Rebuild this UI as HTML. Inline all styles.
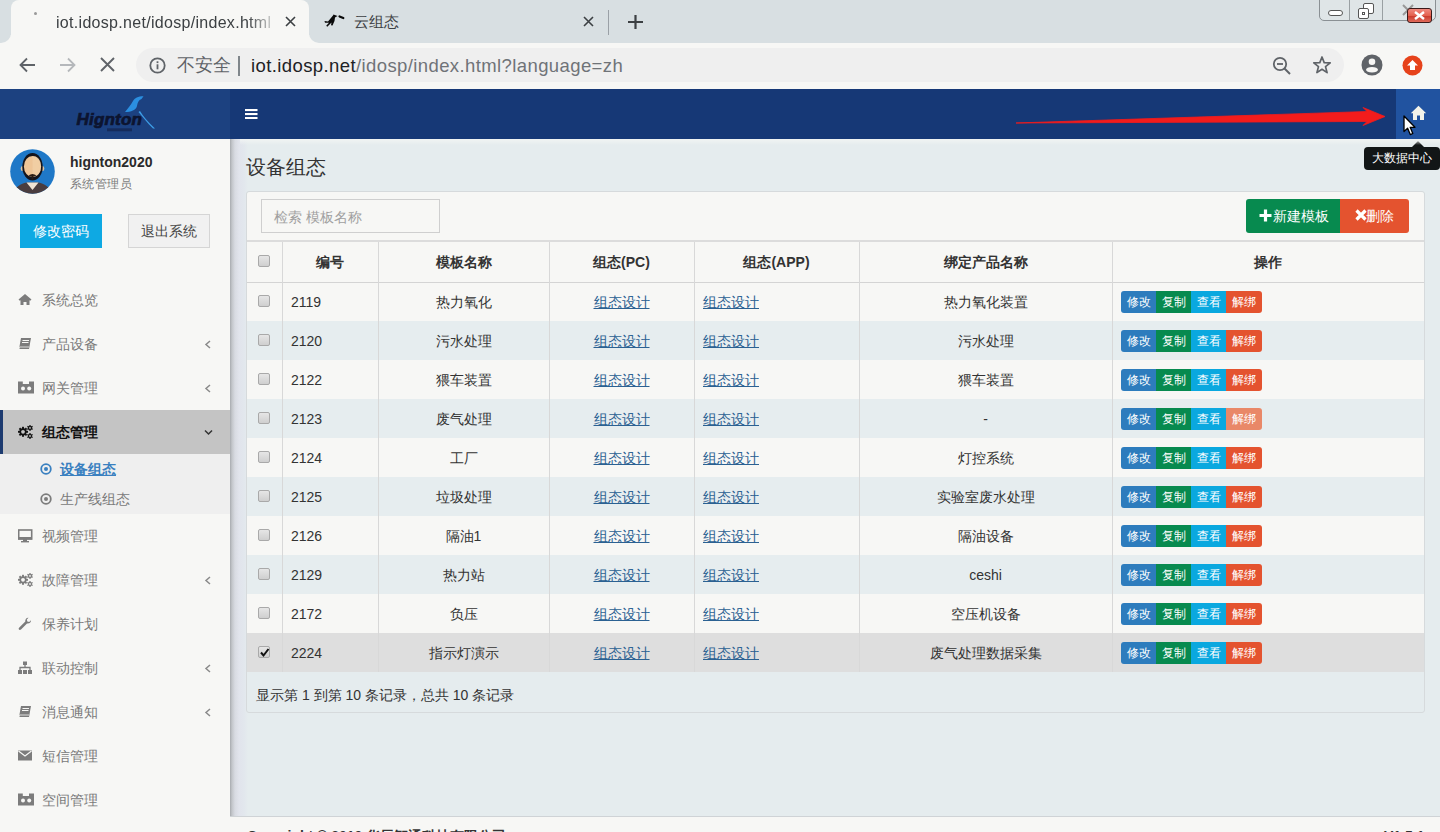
<!DOCTYPE html>
<html><head><meta charset="utf-8">
<style>
*{box-sizing:border-box;margin:0;padding:0}
html,body{width:1440px;height:832px;overflow:hidden;font-family:"Liberation Sans",sans-serif;background:#e5ecee;position:relative}
.a{position:absolute}
/* browser */
#tabs{left:0;top:0;width:1440px;height:43px;background:#d8dfe2}
#tab1{left:11px;top:0px;width:298px;height:44px;background:#f7f7f5;border-radius:8px 8px 0 0}
#toolbar{left:0;top:43px;width:1440px;height:46px;background:#f7f7f5}
#omni{left:136px;top:48px;width:1208px;height:34px;border-radius:17px;background:#efefef}
.t{white-space:nowrap;line-height:1}
/* navbar */
#nav{left:0;top:89px;width:1440px;height:50px;background:#163876}
#logo{left:0;top:89px;width:230px;height:50px;background:#1c4180}
#home{left:1396px;top:89px;width:44px;height:50px;background:#2153a0}
/* sidebar */
#side{left:0;top:139px;width:230px;height:693px;background:#f7f7f5}
#shadow{left:230px;top:139px;width:18px;height:677px;background:linear-gradient(to right,#a8abaf 0,#c3c6cb 2px,#d8dbe2 5px,#e1e4ec 9px,#e2e7ed 14px,#e5ecee 18px)}
.mi{left:0;width:230px;height:44px;color:#787878;font-size:14px}
.mi .tx{position:absolute;left:42px;top:15px}
.mi .ic{position:absolute;left:18px;top:15px;width:14px;height:14px}
.chev{position:absolute;left:204px;top:17px}
/* content */
#box{left:246px;top:191px;width:1178px;height:521px;background:#e5ecee;border:1px solid #d8dcde;border-radius:3px}
.btnx{height:22px;width:35px;color:#fff;font-size:12px;text-align:center;line-height:22px}
table{border-collapse:collapse}
</style></head><body>
<!-- ===== Browser chrome ===== -->
<div id="tabs" class="a"></div>
<div id="tab1" class="a"></div>
<div class="a" style="left:0;top:35px;width:11px;height:9px;background:#f7f7f5"></div>
<div class="a" style="left:-9px;top:25px;width:20px;height:18px;background:#d8dfe2;border-radius:0 0 10px 0"></div>
<div class="a" style="left:309px;top:35px;width:10px;height:9px;background:#f7f7f5"></div>
<div class="a" style="left:309px;top:25px;width:20px;height:18px;background:#d8dfe2;border-radius:0 0 0 10px"></div>
<div class="a" style="left:34px;top:12px;width:3px;height:3px;border-radius:2px;background:#999"></div>
<div class="a t" style="left:56px;top:15px;font-size:16px;letter-spacing:0.3px;color:#3c4043;width:218px;overflow:hidden;-webkit-mask-image:linear-gradient(to right,#000 88%,rgba(0,0,0,0.15))">iot.idosp.net/idosp/index.html</div>
<svg class="a" style="left:285px;top:16px" width="11" height="11" viewBox="0 0 11 11"><path d="M1 1L10 10M10 1L1 10" stroke="#3c4043" stroke-width="1.6"/></svg>
<svg class="a" style="left:318px;top:8px" width="32" height="26" viewBox="0 0 32 26"><path d="M6.5 13 L10 13.5 L15 7.5 L15.5 6.5 L19.5 8 L17 9.5 L16.5 13 L14.5 17.5 L13 17.2 L13.5 14.5 L9.3 18.7 L8.2 17.7 L11 14.8 L7 14.8 Z" fill="#0a0a0a"/><path d="M21.5 8.5 L25.3 10" stroke="#0a0a0a" stroke-width="2.2" stroke-linecap="round"/></svg>
<div class="a t" style="left:354px;top:14px;font-size:15px;color:#3c4043">云组态</div>
<svg class="a" style="left:583px;top:16px" width="11" height="11" viewBox="0 0 11 11"><path d="M1 1L10 10M10 1L1 10" stroke="#3c4043" stroke-width="1.6"/></svg>
<div class="a" style="left:608px;top:10px;width:1px;height:25px;background:#9aa0a6"></div>
<svg class="a" style="left:627px;top:14px" width="17" height="16" viewBox="0 0 17 16"><path d="M8.5 1V15M1 8H16" stroke="#3c4043" stroke-width="2.2"/></svg>
<!-- window controls -->
<div class="a" style="left:1319px;top:-3px;width:117px;height:24px;border:1.5px solid #8a9094;border-radius:0 0 5px 5px;background:#dfe5e7"></div>
<div class="a" style="left:1349px;top:0;width:1px;height:20px;background:#9aa0a3"></div>
<div class="a" style="left:1382px;top:0;width:1px;height:20px;background:#9aa0a3"></div>
<div class="a" style="left:1328px;top:10px;width:15px;height:6px;border:1.5px solid #555;border-radius:3px;background:#fff"></div>
<div class="a" style="left:1363px;top:3px;width:11px;height:11px;border:1.5px solid #555;border-radius:2px;background:#fff"></div>
<div class="a" style="left:1358px;top:8px;width:11px;height:11px;border:1.5px solid #555;border-radius:2px;background:#fff"></div>
<div class="a" style="left:1362px;top:12px;width:3px;height:3px;border:1.5px solid #555"></div>
<svg class="a" style="left:1401px;top:3px" width="14" height="14" viewBox="0 0 14 14"><path d="M2 2L12 12M12 2L2 12" stroke="#999" stroke-width="2"/></svg>
<div class="a" style="left:1407px;top:8px;width:25px;height:15px;border:1.5px solid #3a1a1a;border-radius:3px;background:linear-gradient(#f08a80,#e3604e 50%,#c9382a 52%,#e06a5a)"></div>
<svg class="a" style="left:1413px;top:11px" width="13" height="9" viewBox="0 0 13 9"><path d="M2 1L11 8M11 1L2 8" stroke="#fff" stroke-width="2.4"/></svg>

<div id="toolbar" class="a"></div>
<div id="omni" class="a"></div>
<svg class="a" style="left:19px;top:57px" width="17" height="16" viewBox="0 0 17 16"><path d="M16 8H2M8 1.5L1.5 8L8 14.5" stroke="#5f6368" stroke-width="1.8" fill="none"/></svg>
<svg class="a" style="left:59px;top:57px" width="17" height="16" viewBox="0 0 17 16"><path d="M1 8H15M9 1.5L15.5 8L9 14.5" stroke="#b5b8bb" stroke-width="1.8" fill="none"/></svg>
<svg class="a" style="left:100px;top:57px" width="15" height="15" viewBox="0 0 15 15"><path d="M1 1L14 14M14 1L1 14" stroke="#5f6368" stroke-width="1.9"/></svg>
<svg class="a" style="left:149px;top:57px" width="17" height="17" viewBox="0 0 17 17"><circle cx="8.5" cy="8.5" r="7.2" stroke="#5f6368" stroke-width="1.8" fill="none"/><rect x="7.6" y="7.3" width="1.8" height="5" fill="#5f6368"/><rect x="7.6" y="4.3" width="1.8" height="1.8" fill="#5f6368"/></svg>
<div class="a t" style="left:177px;top:56px;font-size:18px;color:#5f6368">不安全</div>
<div class="a" style="left:238px;top:56px;width:2px;height:20px;background:#80868b"></div>
<div class="a t" style="left:251px;top:57px;font-size:18.5px;letter-spacing:0.4px;color:#202124">iot.idosp.net<span style="color:#6f7378">/idosp/index.html?language=zh</span></div>
<svg class="a" style="left:1272px;top:56px" width="20" height="19" viewBox="0 0 20 19"><circle cx="8" cy="8" r="6.2" stroke="#5f6368" stroke-width="1.8" fill="none"/><path d="M5 8H11" stroke="#5f6368" stroke-width="1.8"/><path d="M12.5 12.5L18 18" stroke="#5f6368" stroke-width="2"/></svg>
<svg class="a" style="left:1312px;top:55px" width="20" height="20" viewBox="0 0 20 20"><path d="M10 2L12.2 7.6L18.2 7.9L13.5 11.6L15.1 17.6L10 14.3L4.9 17.6L6.5 11.6L1.8 7.9L7.8 7.6Z" stroke="#5f6368" stroke-width="1.7" fill="none" stroke-linejoin="round"/></svg>
<svg class="a" style="left:1361px;top:54px" width="22" height="22" viewBox="0 0 22 22"><circle cx="11" cy="11" r="10.5" fill="#5f6368"/><circle cx="11" cy="7.8" r="3.3" fill="#f7f7f5"/><ellipse cx="11" cy="15.8" rx="6" ry="2.8" fill="#f7f7f5"/></svg>
<svg class="a" style="left:1402px;top:55px" width="21" height="21" viewBox="0 0 21 21"><circle cx="10.5" cy="10.5" r="10" fill="#e6421b"/><path d="M10.5 5L16 10.5H13V15H8V10.5H5Z" fill="#fff"/></svg>

<!-- ===== Navbar ===== -->
<div id="nav" class="a"></div>
<div id="logo" class="a"></div>
<div id="home" class="a"></div>
<svg class="a" style="left:70px;top:92px" width="90" height="44" viewBox="0 0 90 44">
<path d="M55 20 C58 16 61 13 63 9 C64.5 6 68 4.2 73.5 4.2 L71.5 7 C68.5 8 67.5 11 67 14 C66 18 61 20 55 20 Z" fill="#2b8fe0"/>
<path d="M70 19 C73 24 78 30 85 36.5 L83 36.5 C77 31 73 25 68.5 20 Z" fill="#3d9de6"/>
<text x="6.5" y="32.5" font-family="Liberation Sans" font-weight="bold" font-style="italic" font-size="17" fill="#0c1430" stroke="#0c1430" stroke-width="0.7" letter-spacing="0.2">Hignton</text>
<rect x="37" y="36.3" width="25" height="3" fill="#101a3c" opacity="0.55"/>
</svg>
<svg class="a" style="left:245px;top:109px" width="13" height="10" viewBox="0 0 13 10"><rect x="0" y="0" width="12.5" height="2.1" fill="#fff"/><rect x="0" y="4" width="12.5" height="2.1" fill="#fff"/><rect x="0" y="8" width="12.5" height="2.1" fill="#fff"/></svg>
<svg class="a" style="left:1410px;top:105px" width="17" height="16" viewBox="0 0 17 16"><path d="M8.5 0.8L0.8 8.2H3V15H7V10.5H10V15H14V8.2H16.2Z" fill="#f3f3ea"/></svg>
<!-- red arrow -->
<svg class="a" style="left:1000px;top:95px" width="400" height="45" viewBox="0 0 400 45"><path d="M16 28 L367 16.5 L363 12.5 L385 21.5 L363 30.5 L367 26.5 Z" fill="#f31c1c" stroke="#f31c1c" stroke-width="0.8" stroke-linejoin="round"/></svg>
<!-- cursor -->
<svg class="a" style="left:1403px;top:115px" width="15" height="22" viewBox="0 0 15 22"><path d="M1 1L1 16.5L4.6 13.2L7.3 19.6L9.8 18.5L7.2 12.3L12 12.3Z" fill="#fff" stroke="#000" stroke-width="1.3" stroke-linejoin="round"/></svg>
<!-- tooltip -->
<div class="a" style="left:1364px;top:147px;width:76px;height:23px;background:#121617;border-radius:4px"></div>
<div class="a" style="left:1412px;top:141px;width:0;height:0;border-left:6px solid transparent;border-right:6px solid transparent;border-bottom:6px solid #121617"></div>
<div class="a t" style="left:1372px;top:152px;font-size:12px;color:#fff">大数据中心</div>

<!-- ===== Sidebar ===== -->
<div id="side" class="a"></div>
<svg class="a" style="left:10px;top:149px" width="45" height="45" viewBox="0 0 45 45">
<defs><clipPath id="cc"><circle cx="22.5" cy="22.5" r="22.3"/></clipPath></defs>
<g clip-path="url(#cc)">
<rect width="45" height="45" fill="#1f78c7"/>
<path d="M3 45C5 38 11 34.5 16.5 33.5L28.5 33.5C34 34.5 40 38 42 45Z" fill="#4a3d3f"/>
<path d="M16.5 33.5L28.5 33.5L22.5 41Z" fill="#efe3d3"/>
<ellipse cx="12.3" cy="19.5" rx="1.6" ry="2.6" fill="#d9c3a8"/>
<ellipse cx="32.7" cy="19.5" rx="1.6" ry="2.6" fill="#d9c3a8"/>
<ellipse cx="22.5" cy="17.8" rx="10.2" ry="13.8" fill="#14141c"/>
<ellipse cx="22.5" cy="17.5" rx="8.6" ry="10.5" fill="#eec597"/>
<path d="M22.5 7C27 7 31 10 31 17.5C31 24 27 28 22.5 28Z" fill="#f3d3ab" opacity="0.6"/>
<path d="M18.5 26.5Q22.5 23.5 26.5 26.5L24 27.5L21 27.5Z" fill="#2a1c14"/>
<rect x="21.6" y="27" width="1.8" height="3.5" fill="#2a1c14"/>
</g></svg>
<div class="a t" style="left:70px;top:155px;font-size:14px;font-weight:bold;color:#2a2a2a">hignton2020</div>
<div class="a t" style="left:70px;top:178px;font-size:12px;letter-spacing:0.4px;color:#7a7a7a">系统管理员</div>
<div class="a" style="left:20px;top:214px;width:82px;height:34px;background:#0ea9e3;color:#fff;font-size:14px;text-align:center;line-height:34px">修改密码</div>
<div class="a" style="left:128px;top:214px;width:82px;height:34px;background:#f1f1f1;border:1px solid #d5d5d5;color:#444;font-size:14px;text-align:center;line-height:32px">退出系统</div>
<svg class="a" style="left:18px;top:293px" width="15" height="14" viewBox="0 0 15 14"><path d="M7 1L0.5 6.5L1.8 7.8L2.5 7.2V12H5.5V9H8.5V12H11.5V7.2L12.2 7.8L13.5 6.5Z" fill="#7c7c7c"/></svg><div class="a t" style="left:42px;top:293px;font-size:14px;color:#7a7a7a">系统总览</div><svg class="a" style="left:18px;top:337px" width="15" height="14" viewBox="0 0 15 14"><path d="M3 1H13L11 12H1Z" fill="#7c7c7c"/><path d="M4.5 3.5H11M4 5.5H10.5" stroke="#f7f7f5" stroke-width="1"/><path d="M1 12L1.5 10H11" stroke="#f7f7f5" stroke-width="0.8" fill="none"/></svg><div class="a t" style="left:42px;top:337px;font-size:14px;color:#7a7a7a">产品设备</div><svg class="a" style="left:204px;top:340px" width="8" height="9" viewBox="0 0 8 9"><path d="M6 1L2 4.5L6 8" stroke="#8a8a8a" stroke-width="1.5" fill="none"/></svg><svg class="a" style="left:18px;top:381px" width="16" height="14" viewBox="0 0 16 14"><rect x="0" y="0.5" width="16" height="12" fill="#7c7c7c"/><rect x="4.8" y="0" width="6.2" height="3" fill="#f7f7f5"/><circle cx="5" cy="7.5" r="2" fill="#f7f7f5"/><circle cx="11.2" cy="7.5" r="2" fill="#f7f7f5"/></svg><div class="a t" style="left:42px;top:381px;font-size:14px;color:#7a7a7a">网关管理</div><svg class="a" style="left:204px;top:384px" width="8" height="9" viewBox="0 0 8 9"><path d="M6 1L2 4.5L6 8" stroke="#8a8a8a" stroke-width="1.5" fill="none"/></svg><div class="a" style="left:0;top:410px;width:230px;height:44px;background:#c4c4c4"></div><div class="a" style="left:0;top:410px;width:3px;height:44px;background:#1d3b70"></div><svg class="a" style="left:18px;top:425px" width="15" height="15" viewBox="0 0 15 15"><circle cx="5" cy="6.8" r="3.6" fill="#111"/><rect x="4.05" y="1.80" width="1.9" height="2.40" fill="#111" transform="rotate(0.0 5 6.8)"/><rect x="4.05" y="1.80" width="1.9" height="2.40" fill="#111" transform="rotate(45.0 5 6.8)"/><rect x="4.05" y="1.80" width="1.9" height="2.40" fill="#111" transform="rotate(90.0 5 6.8)"/><rect x="4.05" y="1.80" width="1.9" height="2.40" fill="#111" transform="rotate(135.0 5 6.8)"/><rect x="4.05" y="1.80" width="1.9" height="2.40" fill="#111" transform="rotate(180.0 5 6.8)"/><rect x="4.05" y="1.80" width="1.9" height="2.40" fill="#111" transform="rotate(225.0 5 6.8)"/><rect x="4.05" y="1.80" width="1.9" height="2.40" fill="#111" transform="rotate(270.0 5 6.8)"/><rect x="4.05" y="1.80" width="1.9" height="2.40" fill="#111" transform="rotate(315.0 5 6.8)"/><circle cx="5" cy="6.8" r="1.9" fill="#c4c4c4"/><circle cx="12" cy="2.9" r="2.0" fill="#111"/><rect x="11.35" y="-0.10" width="1.3" height="2.00" fill="#111" transform="rotate(0.0 12 2.9)"/><rect x="11.35" y="-0.10" width="1.3" height="2.00" fill="#111" transform="rotate(60.0 12 2.9)"/><rect x="11.35" y="-0.10" width="1.3" height="2.00" fill="#111" transform="rotate(120.0 12 2.9)"/><rect x="11.35" y="-0.10" width="1.3" height="2.00" fill="#111" transform="rotate(180.0 12 2.9)"/><rect x="11.35" y="-0.10" width="1.3" height="2.00" fill="#111" transform="rotate(240.0 12 2.9)"/><rect x="11.35" y="-0.10" width="1.3" height="2.00" fill="#111" transform="rotate(300.0 12 2.9)"/><circle cx="12" cy="2.9" r="0.9" fill="#c4c4c4"/><circle cx="12" cy="11" r="2.0" fill="#111"/><rect x="11.35" y="8.00" width="1.3" height="2.00" fill="#111" transform="rotate(0.0 12 11)"/><rect x="11.35" y="8.00" width="1.3" height="2.00" fill="#111" transform="rotate(60.0 12 11)"/><rect x="11.35" y="8.00" width="1.3" height="2.00" fill="#111" transform="rotate(120.0 12 11)"/><rect x="11.35" y="8.00" width="1.3" height="2.00" fill="#111" transform="rotate(180.0 12 11)"/><rect x="11.35" y="8.00" width="1.3" height="2.00" fill="#111" transform="rotate(240.0 12 11)"/><rect x="11.35" y="8.00" width="1.3" height="2.00" fill="#111" transform="rotate(300.0 12 11)"/><circle cx="12" cy="11" r="0.9" fill="#c4c4c4"/></svg><div class="a t" style="left:42px;top:425px;font-size:14px;font-weight:bold;color:#111">组态管理</div><svg class="a" style="left:204px;top:429px" width="9" height="7" viewBox="0 0 9 7"><path d="M1 1.5L4.5 5L8 1.5" stroke="#333" stroke-width="1.5" fill="none"/></svg><div class="a" style="left:0;top:454px;width:230px;height:60px;background:#efefef"></div><svg class="a" style="left:40px;top:463px" width="12" height="12" viewBox="0 0 12 12"><circle cx="6" cy="6" r="4.8" stroke="#3a80c0" stroke-width="1.8" fill="none"/><circle cx="6" cy="6" r="2" fill="#3a80c0"/></svg><div class="a t" style="left:60px;top:462px;font-size:14px;color:#3a80c0;text-decoration:underline;font-weight:bold">设备组态</div><svg class="a" style="left:40px;top:493px" width="12" height="12" viewBox="0 0 12 12"><circle cx="6" cy="6" r="4.8" stroke="#7c7c7c" stroke-width="1.8" fill="none"/><circle cx="6" cy="6" r="2" fill="#7c7c7c"/></svg><div class="a t" style="left:60px;top:492px;font-size:14px;color:#7a7a7a">生产线组态</div><svg class="a" style="left:18px;top:529px" width="15" height="14" viewBox="0 0 15 14"><rect x="0.7" y="1" width="13" height="9" fill="none" stroke="#7c7c7c" stroke-width="1.6"/><rect x="0" y="8" width="14" height="2.5" fill="#7c7c7c"/><rect x="5" y="10" width="4" height="2" fill="#7c7c7c"/><rect x="3" y="12" width="8" height="1.4" fill="#7c7c7c"/></svg><div class="a t" style="left:42px;top:529px;font-size:14px;color:#7a7a7a">视频管理</div><svg class="a" style="left:18px;top:573px" width="15" height="15" viewBox="0 0 15 15"><circle cx="5" cy="6.8" r="3.6" fill="#7c7c7c"/><rect x="4.05" y="1.80" width="1.9" height="2.40" fill="#7c7c7c" transform="rotate(0.0 5 6.8)"/><rect x="4.05" y="1.80" width="1.9" height="2.40" fill="#7c7c7c" transform="rotate(45.0 5 6.8)"/><rect x="4.05" y="1.80" width="1.9" height="2.40" fill="#7c7c7c" transform="rotate(90.0 5 6.8)"/><rect x="4.05" y="1.80" width="1.9" height="2.40" fill="#7c7c7c" transform="rotate(135.0 5 6.8)"/><rect x="4.05" y="1.80" width="1.9" height="2.40" fill="#7c7c7c" transform="rotate(180.0 5 6.8)"/><rect x="4.05" y="1.80" width="1.9" height="2.40" fill="#7c7c7c" transform="rotate(225.0 5 6.8)"/><rect x="4.05" y="1.80" width="1.9" height="2.40" fill="#7c7c7c" transform="rotate(270.0 5 6.8)"/><rect x="4.05" y="1.80" width="1.9" height="2.40" fill="#7c7c7c" transform="rotate(315.0 5 6.8)"/><circle cx="5" cy="6.8" r="1.9" fill="#f7f7f5"/><circle cx="12" cy="2.9" r="2.0" fill="#7c7c7c"/><rect x="11.35" y="-0.10" width="1.3" height="2.00" fill="#7c7c7c" transform="rotate(0.0 12 2.9)"/><rect x="11.35" y="-0.10" width="1.3" height="2.00" fill="#7c7c7c" transform="rotate(60.0 12 2.9)"/><rect x="11.35" y="-0.10" width="1.3" height="2.00" fill="#7c7c7c" transform="rotate(120.0 12 2.9)"/><rect x="11.35" y="-0.10" width="1.3" height="2.00" fill="#7c7c7c" transform="rotate(180.0 12 2.9)"/><rect x="11.35" y="-0.10" width="1.3" height="2.00" fill="#7c7c7c" transform="rotate(240.0 12 2.9)"/><rect x="11.35" y="-0.10" width="1.3" height="2.00" fill="#7c7c7c" transform="rotate(300.0 12 2.9)"/><circle cx="12" cy="2.9" r="0.9" fill="#f7f7f5"/><circle cx="12" cy="11" r="2.0" fill="#7c7c7c"/><rect x="11.35" y="8.00" width="1.3" height="2.00" fill="#7c7c7c" transform="rotate(0.0 12 11)"/><rect x="11.35" y="8.00" width="1.3" height="2.00" fill="#7c7c7c" transform="rotate(60.0 12 11)"/><rect x="11.35" y="8.00" width="1.3" height="2.00" fill="#7c7c7c" transform="rotate(120.0 12 11)"/><rect x="11.35" y="8.00" width="1.3" height="2.00" fill="#7c7c7c" transform="rotate(180.0 12 11)"/><rect x="11.35" y="8.00" width="1.3" height="2.00" fill="#7c7c7c" transform="rotate(240.0 12 11)"/><rect x="11.35" y="8.00" width="1.3" height="2.00" fill="#7c7c7c" transform="rotate(300.0 12 11)"/><circle cx="12" cy="11" r="0.9" fill="#f7f7f5"/></svg><div class="a t" style="left:42px;top:573px;font-size:14px;color:#7a7a7a">故障管理</div><svg class="a" style="left:204px;top:576px" width="8" height="9" viewBox="0 0 8 9"><path d="M6 1L2 4.5L6 8" stroke="#8a8a8a" stroke-width="1.5" fill="none"/></svg><svg class="a" style="left:18px;top:617px" width="15" height="14" viewBox="0 0 15 14"><path d="M13 3.5C13 5.5 11 7 9 6.5L3 12.5C2.3 13.2 1 13 0.8 12.2C0.5 11.5 0.8 11 1.3 10.5L7.3 4.6C6.9 2.5 8.5 0.5 10.5 0.8L8.8 2.6L9.3 4.5L11.2 5L13 3.3Z" fill="#7c7c7c"/></svg><div class="a t" style="left:42px;top:617px;font-size:14px;color:#7a7a7a">保养计划</div><svg class="a" style="left:18px;top:661px" width="15" height="14" viewBox="0 0 15 14"><rect x="5" y="0.5" width="4" height="3.5" fill="#7c7c7c"/><path d="M7 4V6.5M2 9V6.5H12V9" stroke="#7c7c7c" stroke-width="1.3" fill="none"/><rect x="0" y="9" width="4" height="4" fill="#7c7c7c"/><rect x="5" y="9" width="4" height="4" fill="#7c7c7c"/><rect x="10" y="9" width="4" height="4" fill="#7c7c7c"/></svg><div class="a t" style="left:42px;top:661px;font-size:14px;color:#7a7a7a">联动控制</div><svg class="a" style="left:204px;top:664px" width="8" height="9" viewBox="0 0 8 9"><path d="M6 1L2 4.5L6 8" stroke="#8a8a8a" stroke-width="1.5" fill="none"/></svg><svg class="a" style="left:18px;top:705px" width="15" height="14" viewBox="0 0 15 14"><path d="M3 1H13L11 12H1Z" fill="#7c7c7c"/><path d="M4.5 3.5H11M4 5.5H10.5" stroke="#f7f7f5" stroke-width="1"/><path d="M1 12L1.5 10H11" stroke="#f7f7f5" stroke-width="0.8" fill="none"/></svg><div class="a t" style="left:42px;top:705px;font-size:14px;color:#7a7a7a">消息通知</div><svg class="a" style="left:204px;top:708px" width="8" height="9" viewBox="0 0 8 9"><path d="M6 1L2 4.5L6 8" stroke="#8a8a8a" stroke-width="1.5" fill="none"/></svg><svg class="a" style="left:18px;top:749px" width="15" height="14" viewBox="0 0 15 14"><rect x="0" y="1.5" width="14" height="10" fill="#7c7c7c"/><path d="M0.5 2L7 7L13.5 2" stroke="#f7f7f5" stroke-width="1.2" fill="none"/></svg><div class="a t" style="left:42px;top:749px;font-size:14px;color:#7a7a7a">短信管理</div><svg class="a" style="left:18px;top:793px" width="16" height="14" viewBox="0 0 16 14"><rect x="0" y="0.5" width="16" height="12" fill="#7c7c7c"/><rect x="4.8" y="0" width="6.2" height="3" fill="#f7f7f5"/><circle cx="5" cy="7.5" r="2" fill="#f7f7f5"/><circle cx="11.2" cy="7.5" r="2" fill="#f7f7f5"/></svg><div class="a t" style="left:42px;top:793px;font-size:14px;color:#7a7a7a">空间管理</div>
<div id="shadow" class="a"></div>

<!-- ===== Content ===== -->
<div class="a" style="left:240px;top:139px;width:1200px;height:6px;background:linear-gradient(#f1f4f3,rgba(229,236,238,0))"></div>
<div class="a t" style="left:246px;top:157px;font-size:20px;color:#333">设备组态</div>
<div class="a" style="left:246px;top:191px;width:1179px;height:522px;background:#e5ecee;border:1px solid #d6dadc;border-radius:3px"></div>
<div class="a" style="left:247px;top:192px;width:1177px;height:49px;background:#f7f7f5;border-radius:3px 3px 0 0"></div>
<div class="a" style="left:261px;top:199px;width:179px;height:34px;border:1px solid #cfcfcf;background:#f7f7f5"></div>
<div class="a t" style="left:274px;top:210px;font-size:14px;color:#a0a0a0">检索 模板名称</div>
<div class="a" style="left:1246px;top:199px;width:95px;height:34px;background:#078a4f;border-radius:3px 0 0 3px"></div>
<div class="a" style="left:1340px;top:199px;width:69px;height:34px;background:#e4532f;border-radius:0 3px 3px 0"></div>
<svg class="a" style="left:1259px;top:209px" width="13" height="13" viewBox="0 0 13 13"><path d="M6.5 0.5V12.5M0.5 6.5H12.5" stroke="#fff" stroke-width="3.2"/></svg>
<div class="a t" style="left:1273px;top:209px;font-size:14px;color:#fff">新建模板</div>
<svg class="a" style="left:1355px;top:209px" width="12" height="12" viewBox="0 0 12 12"><path d="M1.5 1.5L10.5 10.5M10.5 1.5L1.5 10.5" stroke="#fff" stroke-width="3.2"/></svg>
<div class="a t" style="left:1366px;top:209px;font-size:14px;color:#fff">删除</div>
<div class="a" style="left:247px;top:240px;width:1177px;height:2px;background:#dcdcdc"></div><div class="a" style="left:247px;top:242px;width:1177px;height:40px;background:#f7f7f5"></div><div class="a" style="left:247px;top:282px;width:1177px;height:39px;background:#f7f7f5"></div><div class="a" style="left:247px;top:321px;width:1177px;height:39px;background:#e6edef"></div><div class="a" style="left:247px;top:360px;width:1177px;height:39px;background:#f7f7f5"></div><div class="a" style="left:247px;top:399px;width:1177px;height:39px;background:#e6edef"></div><div class="a" style="left:247px;top:438px;width:1177px;height:39px;background:#f7f7f5"></div><div class="a" style="left:247px;top:477px;width:1177px;height:39px;background:#e6edef"></div><div class="a" style="left:247px;top:516px;width:1177px;height:39px;background:#f7f7f5"></div><div class="a" style="left:247px;top:555px;width:1177px;height:39px;background:#e6edef"></div><div class="a" style="left:247px;top:594px;width:1177px;height:39px;background:#f7f7f5"></div><div class="a" style="left:247px;top:633px;width:1177px;height:39px;background:#dedede"></div><div class="a" style="left:247px;top:282px;width:1177px;height:1px;background:#d4d4d4"></div><div class="a" style="left:282px;top:242px;width:1px;height:430px;background:#d8d8d8"></div><div class="a" style="left:378px;top:242px;width:1px;height:430px;background:#d8d8d8"></div><div class="a" style="left:549px;top:242px;width:1px;height:430px;background:#d8d8d8"></div><div class="a" style="left:694px;top:242px;width:1px;height:430px;background:#d8d8d8"></div><div class="a" style="left:859px;top:242px;width:1px;height:430px;background:#d8d8d8"></div><div class="a" style="left:1112px;top:242px;width:1px;height:430px;background:#d8d8d8"></div><div class="a" style="left:258px;top:255px;width:12px;height:12px;border:1px solid #a9a9a9;border-radius:2px;background:linear-gradient(#e6e6e6,#cfcfcf)"></div><div class="a t" style="left:282px;width:96px;top:255px;text-align:center;font-size:14px;font-weight:bold;color:#333">编号</div><div class="a t" style="left:378px;width:171px;top:255px;text-align:center;font-size:14px;font-weight:bold;color:#333">模板名称</div><div class="a t" style="left:549px;width:145px;top:255px;text-align:center;font-size:14px;font-weight:bold;color:#333">组态(PC)</div><div class="a t" style="left:694px;width:165px;top:255px;text-align:center;font-size:14px;font-weight:bold;color:#333">组态(APP)</div><div class="a t" style="left:859px;width:253px;top:255px;text-align:center;font-size:14px;font-weight:bold;color:#333">绑定产品名称</div><div class="a t" style="left:1112px;width:312px;top:255px;text-align:center;font-size:14px;font-weight:bold;color:#333">操作</div><div class="a" style="left:258px;top:295px;width:12px;height:12px;border:1px solid #a9a9a9;border-radius:2px;background:linear-gradient(#e6e6e6,#cfcfcf)"></div><div class="a t" style="left:291px;top:295px;font-size:14px;color:#333">2119</div><div class="a t" style="left:378px;width:171px;top:295px;text-align:center;font-size:14px;color:#333">热力氧化</div><div class="a t" style="left:549px;width:145px;top:295px;text-align:center;font-size:14px;color:#2b6192;text-decoration:underline">组态设计</div><div class="a t" style="left:703px;top:295px;font-size:14px;color:#2b6192;text-decoration:underline">组态设计</div><div class="a t" style="left:859px;width:253px;top:295px;text-align:center;font-size:14px;color:#333">热力氧化装置</div><div class="a" style="left:1121px;top:291px;width:141px;height:22px;border-radius:3px;overflow:hidden;font-size:12px;color:#fff;line-height:22px;text-align:center">
<div class="a" style="left:0;top:0;width:35px;height:22px;background:#2d7cbd">修改</div><div class="a" style="left:35px;top:0;width:35px;height:22px;background:#078a4f">复制</div><div class="a" style="left:70px;top:0;width:35px;height:22px;background:#0aa8df">查看</div><div class="a" style="left:105px;top:0;width:36px;height:22px;background:#e4532f">解绑</div></div><div class="a" style="left:258px;top:334px;width:12px;height:12px;border:1px solid #a9a9a9;border-radius:2px;background:linear-gradient(#e6e6e6,#cfcfcf)"></div><div class="a t" style="left:291px;top:334px;font-size:14px;color:#333">2120</div><div class="a t" style="left:378px;width:171px;top:334px;text-align:center;font-size:14px;color:#333">污水处理</div><div class="a t" style="left:549px;width:145px;top:334px;text-align:center;font-size:14px;color:#2b6192;text-decoration:underline">组态设计</div><div class="a t" style="left:703px;top:334px;font-size:14px;color:#2b6192;text-decoration:underline">组态设计</div><div class="a t" style="left:859px;width:253px;top:334px;text-align:center;font-size:14px;color:#333">污水处理</div><div class="a" style="left:1121px;top:330px;width:141px;height:22px;border-radius:3px;overflow:hidden;font-size:12px;color:#fff;line-height:22px;text-align:center">
<div class="a" style="left:0;top:0;width:35px;height:22px;background:#2d7cbd">修改</div><div class="a" style="left:35px;top:0;width:35px;height:22px;background:#078a4f">复制</div><div class="a" style="left:70px;top:0;width:35px;height:22px;background:#0aa8df">查看</div><div class="a" style="left:105px;top:0;width:36px;height:22px;background:#e4532f">解绑</div></div><div class="a" style="left:258px;top:373px;width:12px;height:12px;border:1px solid #a9a9a9;border-radius:2px;background:linear-gradient(#e6e6e6,#cfcfcf)"></div><div class="a t" style="left:291px;top:373px;font-size:14px;color:#333">2122</div><div class="a t" style="left:378px;width:171px;top:373px;text-align:center;font-size:14px;color:#333">猥车装置</div><div class="a t" style="left:549px;width:145px;top:373px;text-align:center;font-size:14px;color:#2b6192;text-decoration:underline">组态设计</div><div class="a t" style="left:703px;top:373px;font-size:14px;color:#2b6192;text-decoration:underline">组态设计</div><div class="a t" style="left:859px;width:253px;top:373px;text-align:center;font-size:14px;color:#333">猥车装置</div><div class="a" style="left:1121px;top:369px;width:141px;height:22px;border-radius:3px;overflow:hidden;font-size:12px;color:#fff;line-height:22px;text-align:center">
<div class="a" style="left:0;top:0;width:35px;height:22px;background:#2d7cbd">修改</div><div class="a" style="left:35px;top:0;width:35px;height:22px;background:#078a4f">复制</div><div class="a" style="left:70px;top:0;width:35px;height:22px;background:#0aa8df">查看</div><div class="a" style="left:105px;top:0;width:36px;height:22px;background:#e4532f">解绑</div></div><div class="a" style="left:258px;top:412px;width:12px;height:12px;border:1px solid #a9a9a9;border-radius:2px;background:linear-gradient(#e6e6e6,#cfcfcf)"></div><div class="a t" style="left:291px;top:412px;font-size:14px;color:#333">2123</div><div class="a t" style="left:378px;width:171px;top:412px;text-align:center;font-size:14px;color:#333">废气处理</div><div class="a t" style="left:549px;width:145px;top:412px;text-align:center;font-size:14px;color:#2b6192;text-decoration:underline">组态设计</div><div class="a t" style="left:703px;top:412px;font-size:14px;color:#2b6192;text-decoration:underline">组态设计</div><div class="a t" style="left:859px;width:253px;top:412px;text-align:center;font-size:14px;color:#333">-</div><div class="a" style="left:1121px;top:408px;width:141px;height:22px;border-radius:3px;overflow:hidden;font-size:12px;color:#fff;line-height:22px;text-align:center">
<div class="a" style="left:0;top:0;width:35px;height:22px;background:#2d7cbd">修改</div><div class="a" style="left:35px;top:0;width:35px;height:22px;background:#078a4f">复制</div><div class="a" style="left:70px;top:0;width:35px;height:22px;background:#0aa8df">查看</div><div class="a" style="left:105px;top:0;width:36px;height:22px;background:#e98868">解绑</div></div><div class="a" style="left:258px;top:451px;width:12px;height:12px;border:1px solid #a9a9a9;border-radius:2px;background:linear-gradient(#e6e6e6,#cfcfcf)"></div><div class="a t" style="left:291px;top:451px;font-size:14px;color:#333">2124</div><div class="a t" style="left:378px;width:171px;top:451px;text-align:center;font-size:14px;color:#333">工厂</div><div class="a t" style="left:549px;width:145px;top:451px;text-align:center;font-size:14px;color:#2b6192;text-decoration:underline">组态设计</div><div class="a t" style="left:703px;top:451px;font-size:14px;color:#2b6192;text-decoration:underline">组态设计</div><div class="a t" style="left:859px;width:253px;top:451px;text-align:center;font-size:14px;color:#333">灯控系统</div><div class="a" style="left:1121px;top:447px;width:141px;height:22px;border-radius:3px;overflow:hidden;font-size:12px;color:#fff;line-height:22px;text-align:center">
<div class="a" style="left:0;top:0;width:35px;height:22px;background:#2d7cbd">修改</div><div class="a" style="left:35px;top:0;width:35px;height:22px;background:#078a4f">复制</div><div class="a" style="left:70px;top:0;width:35px;height:22px;background:#0aa8df">查看</div><div class="a" style="left:105px;top:0;width:36px;height:22px;background:#e4532f">解绑</div></div><div class="a" style="left:258px;top:490px;width:12px;height:12px;border:1px solid #a9a9a9;border-radius:2px;background:linear-gradient(#e6e6e6,#cfcfcf)"></div><div class="a t" style="left:291px;top:490px;font-size:14px;color:#333">2125</div><div class="a t" style="left:378px;width:171px;top:490px;text-align:center;font-size:14px;color:#333">垃圾处理</div><div class="a t" style="left:549px;width:145px;top:490px;text-align:center;font-size:14px;color:#2b6192;text-decoration:underline">组态设计</div><div class="a t" style="left:703px;top:490px;font-size:14px;color:#2b6192;text-decoration:underline">组态设计</div><div class="a t" style="left:859px;width:253px;top:490px;text-align:center;font-size:14px;color:#333">实验室废水处理</div><div class="a" style="left:1121px;top:486px;width:141px;height:22px;border-radius:3px;overflow:hidden;font-size:12px;color:#fff;line-height:22px;text-align:center">
<div class="a" style="left:0;top:0;width:35px;height:22px;background:#2d7cbd">修改</div><div class="a" style="left:35px;top:0;width:35px;height:22px;background:#078a4f">复制</div><div class="a" style="left:70px;top:0;width:35px;height:22px;background:#0aa8df">查看</div><div class="a" style="left:105px;top:0;width:36px;height:22px;background:#e4532f">解绑</div></div><div class="a" style="left:258px;top:529px;width:12px;height:12px;border:1px solid #a9a9a9;border-radius:2px;background:linear-gradient(#e6e6e6,#cfcfcf)"></div><div class="a t" style="left:291px;top:529px;font-size:14px;color:#333">2126</div><div class="a t" style="left:378px;width:171px;top:529px;text-align:center;font-size:14px;color:#333">隔油1</div><div class="a t" style="left:549px;width:145px;top:529px;text-align:center;font-size:14px;color:#2b6192;text-decoration:underline">组态设计</div><div class="a t" style="left:703px;top:529px;font-size:14px;color:#2b6192;text-decoration:underline">组态设计</div><div class="a t" style="left:859px;width:253px;top:529px;text-align:center;font-size:14px;color:#333">隔油设备</div><div class="a" style="left:1121px;top:525px;width:141px;height:22px;border-radius:3px;overflow:hidden;font-size:12px;color:#fff;line-height:22px;text-align:center">
<div class="a" style="left:0;top:0;width:35px;height:22px;background:#2d7cbd">修改</div><div class="a" style="left:35px;top:0;width:35px;height:22px;background:#078a4f">复制</div><div class="a" style="left:70px;top:0;width:35px;height:22px;background:#0aa8df">查看</div><div class="a" style="left:105px;top:0;width:36px;height:22px;background:#e4532f">解绑</div></div><div class="a" style="left:258px;top:568px;width:12px;height:12px;border:1px solid #a9a9a9;border-radius:2px;background:linear-gradient(#e6e6e6,#cfcfcf)"></div><div class="a t" style="left:291px;top:568px;font-size:14px;color:#333">2129</div><div class="a t" style="left:378px;width:171px;top:568px;text-align:center;font-size:14px;color:#333">热力站</div><div class="a t" style="left:549px;width:145px;top:568px;text-align:center;font-size:14px;color:#2b6192;text-decoration:underline">组态设计</div><div class="a t" style="left:703px;top:568px;font-size:14px;color:#2b6192;text-decoration:underline">组态设计</div><div class="a t" style="left:859px;width:253px;top:568px;text-align:center;font-size:14px;color:#333">ceshi</div><div class="a" style="left:1121px;top:564px;width:141px;height:22px;border-radius:3px;overflow:hidden;font-size:12px;color:#fff;line-height:22px;text-align:center">
<div class="a" style="left:0;top:0;width:35px;height:22px;background:#2d7cbd">修改</div><div class="a" style="left:35px;top:0;width:35px;height:22px;background:#078a4f">复制</div><div class="a" style="left:70px;top:0;width:35px;height:22px;background:#0aa8df">查看</div><div class="a" style="left:105px;top:0;width:36px;height:22px;background:#e4532f">解绑</div></div><div class="a" style="left:258px;top:607px;width:12px;height:12px;border:1px solid #a9a9a9;border-radius:2px;background:linear-gradient(#e6e6e6,#cfcfcf)"></div><div class="a t" style="left:291px;top:607px;font-size:14px;color:#333">2172</div><div class="a t" style="left:378px;width:171px;top:607px;text-align:center;font-size:14px;color:#333">负压</div><div class="a t" style="left:549px;width:145px;top:607px;text-align:center;font-size:14px;color:#2b6192;text-decoration:underline">组态设计</div><div class="a t" style="left:703px;top:607px;font-size:14px;color:#2b6192;text-decoration:underline">组态设计</div><div class="a t" style="left:859px;width:253px;top:607px;text-align:center;font-size:14px;color:#333">空压机设备</div><div class="a" style="left:1121px;top:603px;width:141px;height:22px;border-radius:3px;overflow:hidden;font-size:12px;color:#fff;line-height:22px;text-align:center">
<div class="a" style="left:0;top:0;width:35px;height:22px;background:#2d7cbd">修改</div><div class="a" style="left:35px;top:0;width:35px;height:22px;background:#078a4f">复制</div><div class="a" style="left:70px;top:0;width:35px;height:22px;background:#0aa8df">查看</div><div class="a" style="left:105px;top:0;width:36px;height:22px;background:#e4532f">解绑</div></div><div class="a" style="left:258px;top:646px;width:12px;height:12px;border:1px solid #a9a9a9;border-radius:2px;background:linear-gradient(#e6e6e6,#cfcfcf)"></div><svg class="a" style="left:259px;top:647px" width="11" height="11" viewBox="0 0 11 11"><path d="M2 5.5L4.5 8.5L9.5 2" stroke="#111" stroke-width="2" fill="none"/></svg><div class="a t" style="left:291px;top:646px;font-size:14px;color:#333">2224</div><div class="a t" style="left:378px;width:171px;top:646px;text-align:center;font-size:14px;color:#333">指示灯演示</div><div class="a t" style="left:549px;width:145px;top:646px;text-align:center;font-size:14px;color:#2b6192;text-decoration:underline">组态设计</div><div class="a t" style="left:703px;top:646px;font-size:14px;color:#2b6192;text-decoration:underline">组态设计</div><div class="a t" style="left:859px;width:253px;top:646px;text-align:center;font-size:14px;color:#333">废气处理数据采集</div><div class="a" style="left:1121px;top:642px;width:141px;height:22px;border-radius:3px;overflow:hidden;font-size:12px;color:#fff;line-height:22px;text-align:center">
<div class="a" style="left:0;top:0;width:35px;height:22px;background:#2d7cbd">修改</div><div class="a" style="left:35px;top:0;width:35px;height:22px;background:#078a4f">复制</div><div class="a" style="left:70px;top:0;width:35px;height:22px;background:#0aa8df">查看</div><div class="a" style="left:105px;top:0;width:36px;height:22px;background:#e4532f">解绑</div></div><div class="a t" style="left:256px;top:688px;font-size:14px;color:#333">显示第 1 到第 10 条记录，总共 10 条记录</div><div class="a" style="left:230px;top:816px;width:1210px;height:16px;background:#f7f7f5;border-top:1px solid #cfd3d6"></div><div class="a t" style="left:247px;top:829px;font-size:14px;font-weight:bold;color:#333">Copyright © 2019 华辰智通科技有限公司</div><div class="a t" style="left:1384px;top:829px;font-size:14px;font-weight:bold;color:#333">V1.5.1</div>
</body></html>
